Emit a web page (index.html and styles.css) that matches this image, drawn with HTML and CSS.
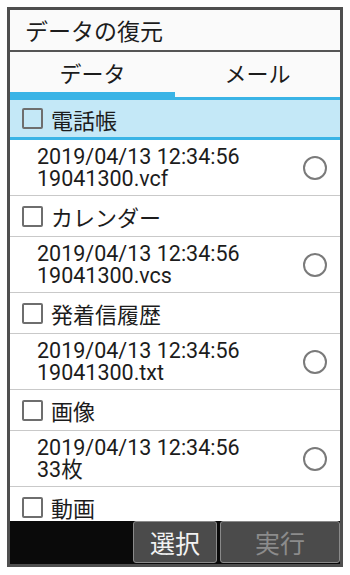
FILE: index.html
```html
<!DOCTYPE html>
<html lang="ja">
<head>
  <meta charset="UTF-8" />
  <meta name="viewport" content="width=device-width, initial-scale=1.0" />
  <title>データの復元</title>
  <link rel="stylesheet" href="styles.css">
</head>
<body>
  <div class="screen">
    <header class="title">データの復元</header>

    <div class="tabs">
      <div class="tab active">データ</div>
      <div class="tab">メール</div>
    </div>

    <div class="list">
      <div class="row category selected"><span class="check"></span>電話帳</div>
      <div class="row file">
        <div class="info">
          <div>2019/04/13 12:34:56</div>
          <div>19041300.vcf</div>
        </div>
        <span class="radio"></span>
      </div>
      <div class="row category"><span class="check"></span>カレンダー</div>
      <div class="row file">
        <div class="info">
          <div>2019/04/13 12:34:56</div>
          <div>19041300.vcs</div>
        </div>
        <span class="radio"></span>
      </div>
      <div class="row category"><span class="check"></span>発着信履歴</div>
      <div class="row file">
        <div class="info">
          <div>2019/04/13 12:34:56</div>
          <div>19041300.txt</div>
        </div>
        <span class="radio"></span>
      </div>
      <div class="row category"><span class="check"></span>画像</div>
      <div class="row file">
        <div class="info">
          <div>2019/04/13 12:34:56</div>
          <div>33枚</div>
        </div>
        <span class="radio"></span>
      </div>
      <div class="row category"><span class="check"></span>動画</div>
    </div>

    <div class="softkeys">
      <div class="key-blank"></div>
      <button class="softkey">選択</button>
      <button class="softkey disabled">実行</button>
    </div>
  </div>
</body>
</html>
```

FILE: styles.css
```css
body {
  margin: 0;
  padding: 0;
  background: #fff;
  font-family: Roboto, "Noto Sans CJK JP", sans-serif;
  color: #1c1c1c;
}
.screen {
  margin: 7px 0 0 7px;
  width: 330px;
  height: 554px;
  border: 3px solid #4f4f4f;
  display: flex;
  flex-direction: column;
  background: #fff;
}
.title {
  height: 40px;
  line-height: 40px;
  padding-left: 15px;
  font-family: "Noto Sans CJK JP", sans-serif;
  font-size: 23px;
  background: #fafafa;
  border-bottom: 2px solid #555;
  flex-shrink: 0;
}
.tabs {
  display: flex;
  height: 45px;
  background: #fafafa;
  border-bottom: 3px solid #3ab4e6;
  flex-shrink: 0;
}
.tab {
  flex: 1;
  text-align: center;
  font-family: "Noto Sans CJK JP", sans-serif;
  font-size: 22px;
  line-height: 40px;
}
.tab.active {
  box-shadow: inset 0 -5px 0 #3ab4e6;
}
.list {
  flex: 1;
  overflow: hidden;
}
.row {
  display: flex;
  align-items: center;
  border-bottom: 1px solid #c9c9c9;
}
.category {
  height: 40px;
  padding-left: 12px;
  font-family: "Noto Sans CJK JP", sans-serif;
  font-size: 22px;
}
.category.selected {
  height: 37px;
  background: #c4e8f7;
  border-bottom: 3px solid #3ab4e6;
}
.check {
  width: 17px;
  height: 17px;
  border: 2px solid #6e6e6e;
  border-radius: 2px;
  margin-right: 8px;
}
.file {
  height: 55px;
  padding-left: 27px;
  padding-right: 13px;
  justify-content: space-between;
}
.info {
  font-size: 21.5px;
  line-height: 22px;
}
.radio {
  width: 20px;
  height: 20px;
  border: 2px solid #7a7a7a;
  border-radius: 50%;
}
.softkeys {
  height: 43px;
  display: flex;
  gap: 3px;
  background: #0a0a0a;
  flex-shrink: 0;
}
.key-blank {
  width: 120px;
}
.softkey {
  height: 42px;
  border: 1px solid #8a8a8a;
  border-radius: 3px;
  background: #4b4b4b;
  color: #f2f2f2;
  font-family: "Noto Sans CJK JP", sans-serif;
  font-size: 25px;
  padding: 0;
  width: 84px;
}
.softkey.disabled {
  width: 120px;
  color: #8c8c8c;
}
```
